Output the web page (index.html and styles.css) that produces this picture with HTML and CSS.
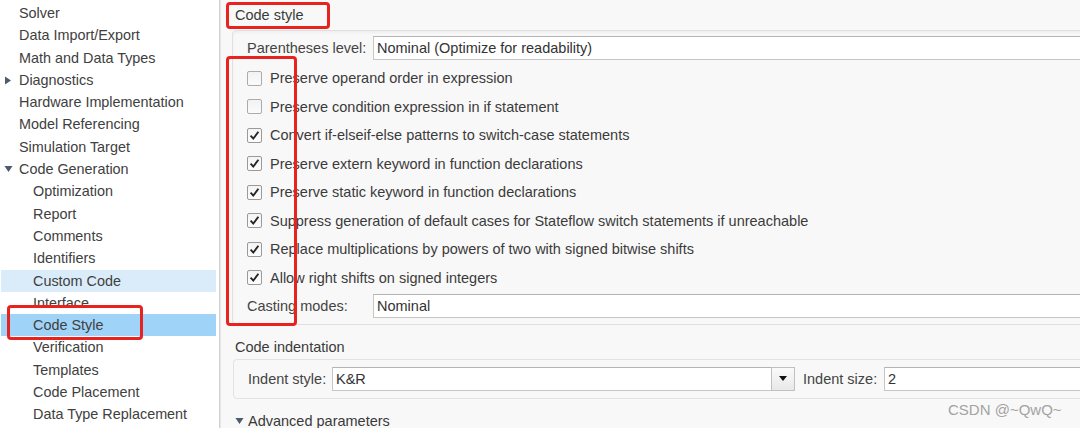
FILE: index.html
```html
<!DOCTYPE html>
<html>
<head>
<meta charset="utf-8">
<link rel="stylesheet" href="styles.css">
</head>
<body>
<div class="app">
  <nav class="sidebar">
    <div class="item">Solver</div>
    <div class="item">Data Import/Export</div>
    <div class="item">Math and Data Types</div>
    <div class="item"><svg class="tri" width="8" height="9" viewBox="0 0 8 9"><polygon points="1,0.5 7,4.5 1,8.5" fill="#4d5b6b"/></svg>Diagnostics</div>
    <div class="item">Hardware Implementation</div>
    <div class="item">Model Referencing</div>
    <div class="item">Simulation Target</div>
    <div class="item"><svg class="tri" width="9" height="8" viewBox="0 0 9 8"><polygon points="0.5,1 8.5,1 4.5,7" fill="#4d5b6b"/></svg>Code Generation</div>
    <div class="item sub">Optimization</div>
    <div class="item sub">Report</div>
    <div class="item sub">Comments</div>
    <div class="item sub">Identifiers</div>
    <div class="item sub hover">Custom Code</div>
    <div class="item sub">Interface</div>
    <div class="item sub selected">Code Style</div>
    <div class="item sub">Verification</div>
    <div class="item sub">Templates</div>
    <div class="item sub">Code Placement</div>
    <div class="item sub">Data Type Replacement</div>
  </nav>
  <main class="main">
    <div class="sec-head">Code style</div>
    <div class="panel">
      <div class="row first">
        <span class="label">Parentheses level:</span>
        <div class="field">Nominal (Optimize for readability)</div>
      </div>
      <div class="row"><span class="cb"></span><span>Preserve operand order in expression</span></div>
      <div class="row"><span class="cb"></span><span>Preserve condition expression in if statement</span></div>
      <div class="row"><span class="cb on"><svg width="13" height="13" viewBox="0 0 13 13"><path d="M2.6 6.6 L5.3 9.6 L10.4 2.8" fill="none" stroke="#262626" stroke-width="1.9"/></svg></span><span>Convert if-elseif-else patterns to switch-case statements</span></div>
      <div class="row"><span class="cb on"><svg width="13" height="13" viewBox="0 0 13 13"><path d="M2.6 6.6 L5.3 9.6 L10.4 2.8" fill="none" stroke="#262626" stroke-width="1.9"/></svg></span><span>Preserve extern keyword in function declarations</span></div>
      <div class="row"><span class="cb on"><svg width="13" height="13" viewBox="0 0 13 13"><path d="M2.6 6.6 L5.3 9.6 L10.4 2.8" fill="none" stroke="#262626" stroke-width="1.9"/></svg></span><span>Preserve static keyword in function declarations</span></div>
      <div class="row"><span class="cb on"><svg width="13" height="13" viewBox="0 0 13 13"><path d="M2.6 6.6 L5.3 9.6 L10.4 2.8" fill="none" stroke="#262626" stroke-width="1.9"/></svg></span><span>Suppress generation of default cases for Stateflow switch statements if unreachable</span></div>
      <div class="row"><span class="cb on"><svg width="13" height="13" viewBox="0 0 13 13"><path d="M2.6 6.6 L5.3 9.6 L10.4 2.8" fill="none" stroke="#262626" stroke-width="1.9"/></svg></span><span>Replace multiplications by powers of two with signed bitwise shifts</span></div>
      <div class="row"><span class="cb on"><svg width="13" height="13" viewBox="0 0 13 13"><path d="M2.6 6.6 L5.3 9.6 L10.4 2.8" fill="none" stroke="#262626" stroke-width="1.9"/></svg></span><span>Allow right shifts on signed integers</span></div>
      <div class="row">
        <span class="label">Casting modes:</span>
        <div class="field">Nominal</div>
      </div>
    </div>
    <div class="sec-head second">Code indentation</div>
    <div class="box">
      <span class="label2">Indent style:</span>
      <div class="combo">
        <div class="combo-text">K&amp;R</div>
        <div class="combo-btn"><svg width="8" height="5" viewBox="0 0 8 5"><polygon points="0,0 8,0 4,5" fill="#111"/></svg></div>
      </div>
      <span class="label3">Indent size:</span>
      <div class="field small">2</div>
    </div>
    <div class="adv"><svg width="9" height="8" viewBox="0 0 9 8"><polygon points="0.5,1 8.5,1 4.5,7" fill="#4d5b6b"/></svg>Advanced parameters</div>
  </main>
</div>
<div class="mark mark-title"></div>
<div class="mark mark-col"></div>
<div class="mark mark-nav"></div>
<div class="csdn">CSDN @~QwQ~</div>
</body>
</html>
```

FILE: styles.css
```css
html, body {
  margin: 0;
  padding: 0;
  width: 1080px;
  height: 428px;
  overflow: hidden;
  font-family: "Liberation Sans", Arial, sans-serif;
  font-size: 14.5px;
  color: #3b3b3b;
}
.app {
  display: flex;
  height: 428px;
}
.sidebar {
  width: 216px;
  padding: 2px 3px 0 0;
  background: #ffffff;
  border-right: 1px solid #d2d2d2;
  flex: none;
  font-size: 14.4px;
}
.item {
  height: 22.3px;
  line-height: 22.3px;
  padding-left: 19px;
  position: relative;
  white-space: nowrap;
  color: #404040;
}
.item.sub { padding-left: 33px; }
.item.hover { background: #daecfa; margin-left: 1px; padding-left: 32px; }
.item.selected { background: #9fd3f7; margin-left: 1px; padding-left: 32px; }
.tri {
  position: absolute;
  left: 4px;
  top: 7px;
}
.main {
  flex: 1;
  background: #f8f8f8;
  padding-left: 11px;
  margin-right: -40px;
  border-left: 1px solid #e6e6e6;
}
.sec-head {
  height: 30px;
  line-height: 30px;
  padding-left: 3px;
  color: #3a3a3a;
}
.sec-head.second {
  height: 34px;
  line-height: 24px;
  padding-top: 10px;
  box-sizing: border-box;
}
.panel {
  border: 1px solid #e0e0e0;
  border-radius: 4px;
  padding-left: 14px;
  padding-bottom: 3px;
  box-shadow: inset 0 2px 3px rgba(0,0,0,0.04);
}
.row {
  height: 28.5px;
  display: flex;
  align-items: center;
  white-space: nowrap;
}
.row.first { height: 33px; }
.label {
  width: 126px;
  flex: none;
  color: #444;
}
.field {
  flex: 1;
  height: 24px;
  box-sizing: border-box;
  background: #fff;
  border: 1px solid #c6c6c6;
  border-top-color: #b4b4b4;
  line-height: 22px;
  padding-left: 3px;
  color: #333;
}
.cb {
  width: 15px;
  height: 15px;
  box-sizing: border-box;
  border: 1px solid #ababab;
  border-radius: 2px;
  background: linear-gradient(#f2f2f2, #fbfbfb);
  margin-right: 8px;
  flex: none;
  display: flex;
  align-items: center;
  justify-content: center;
}
.cb.on { border-color: #9a9a9a; background: linear-gradient(#f4f4f4, #fdfdfd); }
.cb svg { display: block; }
.box {
  margin-left: 1px;
  height: 40px;
  box-sizing: border-box;
  border: 1px solid #e2e2e2;
  border-radius: 4px;
  display: flex;
  align-items: center;
  padding-left: 14px;
  white-space: nowrap;
}
.label2 { width: 84px; flex: none; color: #444; }
.label3 { width: 81px; flex: none; color: #444; margin-left: 8px; }
.combo {
  width: 463px;
  height: 24px;
  display: flex;
  flex: none;
}
.combo-text {
  flex: 1;
  background: #fff;
  border: 1px solid #c6c6c6;
  border-top-color: #b4b4b4;
  border-right: none;
  line-height: 22px;
  padding-left: 3px;
  color: #333;
}
.combo-btn {
  width: 24px;
  box-sizing: border-box;
  border: 1px solid #c0c0c0;
  background: linear-gradient(#fafafa, #e8e8e8);
  display: flex;
  align-items: center;
  justify-content: center;
}
.field.small { flex: 1; }
.adv {
  margin-top: 12px;
  height: 20px;
  line-height: 20px;
  padding-left: 3px;
  display: flex;
  align-items: center;
  gap: 4px;
  color: #3a3a3a;
}
.mark {
  position: absolute;
  border: 3px solid #e8231f;
  border-radius: 4px;
  box-sizing: border-box;
}
.mark-title { left: 226px; top: 2px; width: 104px; height: 27px; }
.mark-col { left: 226px; top: 56px; width: 71px; height: 270px; }
.mark-nav { left: 7px; top: 305px; width: 136px; height: 35px; }
.csdn {
  position: absolute;
  left: 948px;
  top: 400px;
  font-size: 15px;
  color: #a3a3a3;
  line-height: 20px;
}
```
